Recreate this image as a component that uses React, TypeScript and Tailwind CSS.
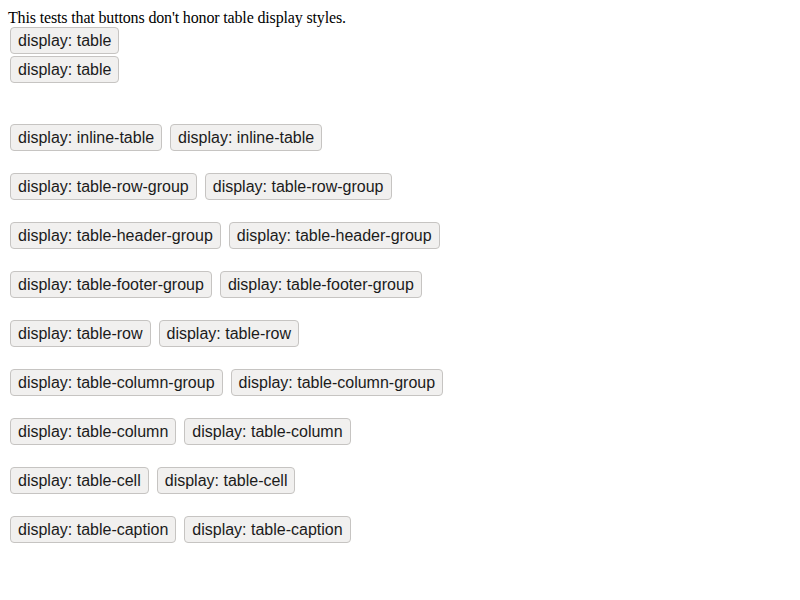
import React from "react";

const Btn = ({ label }: { label: string }) => (
  <button
    className="ml-[2px] mr-[2px] box-border flex h-[27px] items-center rounded-[4px] border border-[#c6c4c2] bg-[#f1f0ef] px-[7px] text-[16px] leading-[18px] text-[#1b1b1b]"
    style={{ fontFamily: '"Liberation Sans", Arial, sans-serif' }}
  >
    {label}
  </button>
);

const pairs = [
  "inline-table",
  "table-row-group",
  "table-header-group",
  "table-footer-group",
  "table-row",
  "table-column-group",
  "table-column",
  "table-cell",
  "table-caption",
];

export default function App() {
  return (
    <div className="min-h-[600px] w-[800px] bg-white p-2 text-black" style={{ fontFamily: '"Liberation Serif", "Times New Roman", serif' }}>
      <div className="text-[16px] leading-[19px] tracking-[-0.15px]">This tests that buttons don't honor table display styles.</div>
      <div className="flex flex-col items-start">
        <Btn label="display: table" />
        <div className="mt-[2px]">
          <Btn label="display: table" />
        </div>
      </div>
      <div className="mt-[41px] flex flex-col gap-[22px]">
        {pairs.map((p) => (
          <div key={p} className="flex gap-[4px]">
            <Btn label={`display: ${p}`} />
            <Btn label={`display: ${p}`} />
          </div>
        ))}
      </div>
    </div>
  );
}
